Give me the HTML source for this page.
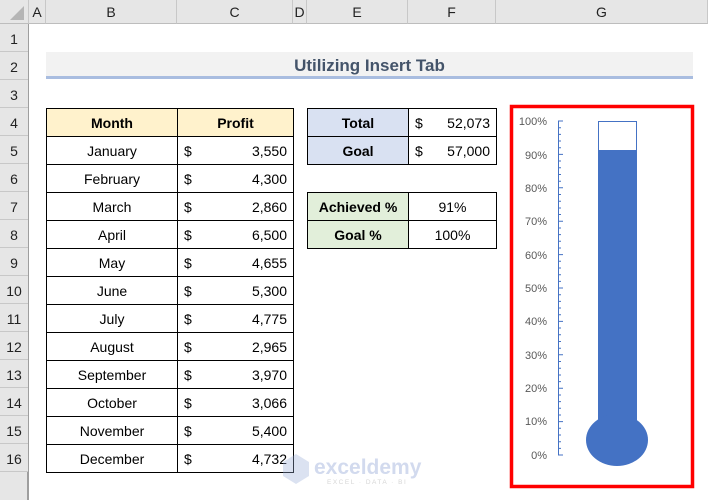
<!DOCTYPE html>
<html><head><meta charset="utf-8"><style>
*{margin:0;padding:0;box-sizing:border-box}
body{width:708px;height:500px;overflow:hidden;background:#fff;font-family:"Liberation Sans",Calibri,sans-serif;position:relative;font-size:14px;color:#000}
.a{position:absolute}
.ch{position:absolute;top:0;height:24px;background:#e6e6e6;border-right:1px solid #c8c8c8;border-bottom:1px solid #bdbdbd;text-align:center;line-height:25px;font-size:14px;color:#222}
.rh{position:absolute;left:0;width:28px;height:28px;background:#e6e6e6;border-bottom:1px solid #c8c8c8;text-align:center;line-height:30px;font-size:14px;color:#222}
table{border-collapse:collapse;position:absolute}
td{border:1px solid #000;height:28px;padding:0 6px;font-size:14px}
.hd td{background:#fff2cc;font-weight:bold;text-align:center}
.m{text-align:center}
.d{display:flex;justify-content:space-between}
</style></head><body>
<div class="ch" style="left:0;width:29px"><svg width="29" height="24"><polygon points="24,6 24,20 10,20" fill="#b5b5b5"/></svg></div>
<div class="ch" style="left:29px;width:17px">A</div>
<div class="ch" style="left:46px;width:131px">B</div>
<div class="ch" style="left:177px;width:116px">C</div>
<div class="ch" style="left:293px;width:14px">D</div>
<div class="ch" style="left:307px;width:101px">E</div>
<div class="ch" style="left:408px;width:88px">F</div>
<div class="ch" style="left:496px;width:212px">G</div>
<div class="a" style="left:0;top:24px;width:29px;height:476px;background:#e6e6e6;border-right:2px solid #9e9e9e"></div>
<div class="rh" style="top:24px">1</div><div class="rh" style="top:52px">2</div><div class="rh" style="top:80px">3</div><div class="rh" style="top:108px">4</div><div class="rh" style="top:136px">5</div><div class="rh" style="top:164px">6</div><div class="rh" style="top:192px">7</div><div class="rh" style="top:220px">8</div><div class="rh" style="top:248px">9</div><div class="rh" style="top:276px">10</div><div class="rh" style="top:304px">11</div><div class="rh" style="top:332px">12</div><div class="rh" style="top:360px">13</div><div class="rh" style="top:388px">14</div><div class="rh" style="top:416px">15</div><div class="rh" style="top:444px">16</div>

<div class="a" style="left:46px;top:52px;width:647px;height:27px;background:#f2f2f2;border-bottom:3px solid #a9bde0;text-align:center;line-height:27px;font-weight:bold;font-size:17px;color:#44546a">Utilizing Insert Tab</div>

<table style="left:46px;top:108px;width:248px">
<tr class="hd"><td style="width:131px">Month</td><td>Profit</td></tr>
<tr><td class="m">January</td><td><div class="d"><span>$</span><span>3,550</span></div></td></tr>
<tr><td class="m">February</td><td><div class="d"><span>$</span><span>4,300</span></div></td></tr>
<tr><td class="m">March</td><td><div class="d"><span>$</span><span>2,860</span></div></td></tr>
<tr><td class="m">April</td><td><div class="d"><span>$</span><span>6,500</span></div></td></tr>
<tr><td class="m">May</td><td><div class="d"><span>$</span><span>4,655</span></div></td></tr>
<tr><td class="m">June</td><td><div class="d"><span>$</span><span>5,300</span></div></td></tr>
<tr><td class="m">July</td><td><div class="d"><span>$</span><span>4,775</span></div></td></tr>
<tr><td class="m">August</td><td><div class="d"><span>$</span><span>2,965</span></div></td></tr>
<tr><td class="m">September</td><td><div class="d"><span>$</span><span>3,970</span></div></td></tr>
<tr><td class="m">October</td><td><div class="d"><span>$</span><span>3,066</span></div></td></tr>
<tr><td class="m">November</td><td><div class="d"><span>$</span><span>5,400</span></div></td></tr>
<tr><td class="m">December</td><td><div class="d"><span>$</span><span>4,732</span></div></td></tr>
</table>

<table style="left:307px;top:108px;width:190px">
<tr><td style="width:101px;background:#d9e1f2;font-weight:bold" class="m">Total</td><td><div class="d"><span>$</span><span>52,073</span></div></td></tr>
<tr><td style="background:#d9e1f2;font-weight:bold" class="m">Goal</td><td><div class="d"><span>$</span><span>57,000</span></div></td></tr>
</table>
<table style="left:307px;top:192px;width:190px">
<tr><td style="width:101px;background:#e2efda;font-weight:bold" class="m">Achieved %</td><td class="m">91%</td></tr>
<tr><td style="background:#e2efda;font-weight:bold" class="m">Goal %</td><td class="m">100%</td></tr>
</table>

<svg class="a" style="left:0;top:0" width="708" height="500">
<rect x="511.5" y="106.5" width="181" height="380" fill="#fff" stroke="#ff0000" stroke-width="3.5"/>
<g font-family="Liberation Sans,sans-serif" font-size="11" fill="#595959" text-anchor="end">
<text x="547" y="125">100%</text><text x="547" y="159">90%</text><text x="547" y="192">80%</text><text x="547" y="225">70%</text><text x="547" y="259">60%</text><text x="547" y="292">50%</text><text x="547" y="325">40%</text><text x="547" y="359">30%</text><text x="547" y="392">20%</text><text x="547" y="425">10%</text><text x="547" y="459">0%</text>
</g>
<line x1="558.5" y1="121" x2="558.5" y2="455" stroke="#4472c4" stroke-width="1"/>
<path stroke="#4472c4" stroke-width="1" d="M558 121h5M558 127.7h3M558 134.4h3M558 141h3M558 147.7h3M558 154.4h5M558 161h3M558 167.8h3M558 174.5h3M558 181.2h3M558 187.8h5M558 194.5h3M558 201.2h3M558 208h3M558 214.5h3M558 221.2h5M558 228h3M558 234.6h3M558 241.3h3M558 248h3M558 254.6h5M558 261.3h3M558 268h3M558 274.7h3M558 281.4h3M558 288h5M558 294.7h3M558 301.4h3M558 308h3M558 314.8h3M558 321.4h5M558 328h3M558 334.8h3M558 341.5h3M558 348.2h3M558 354.8h5M558 361.5h3M558 368.2h3M558 375h3M558 381.6h3M558 388.2h5M558 395h3M558 401.6h3M558 408.3h3M558 415h3M558 421.6h5M558 428.3h3M558 435h3M558 441.7h3M558 448.4h3M558 455h5"/>
<rect x="598.5" y="121.5" width="38" height="330" fill="#fff" stroke="#4472c4"/>
<rect x="598" y="150" width="39" height="290" fill="#4472c4"/>
<ellipse cx="617" cy="440" rx="31" ry="26" fill="#4472c4"/>
<g opacity="0.35"><polygon points="283,462 296,454 309,462 309,476 296,484 283,476" fill="#9aaed8"/>
<text x="314" y="474" font-family="Liberation Sans,sans-serif" font-size="21" font-weight="bold" fill="#7f97d0">exceldemy</text>
<text x="327" y="484" font-family="Liberation Sans,sans-serif" font-size="6.5" fill="#8a8a8a" letter-spacing="1.5">EXCEL · DATA · BI</text></g>
</svg>
</body></html>
